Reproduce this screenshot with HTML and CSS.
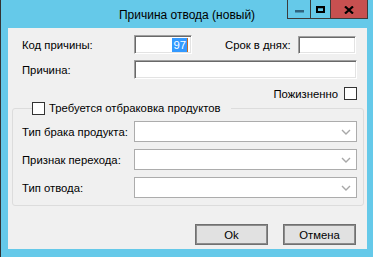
FILE: index.html
```html
<!DOCTYPE html>
<html>
<head>
<meta charset="utf-8">
<link rel="stylesheet" href="styles.css">
</head>
<body>
<div class="window">
  <div class="titlebar">
    <div class="title">Причина отвода (новый)</div>
    <div class="controls">
      <div class="ctl ctl-min"><svg width="9" height="3" viewBox="0 0 9 3"><rect x="0" y="0" width="9" height="2.5" fill="#2f6580"/></svg></div>
      <div class="ctl ctl-max"><svg width="9" height="7" viewBox="0 0 9 7"><rect x="1" y="1.25" width="7" height="4.75" fill="none" stroke="#000" stroke-width="2"/><rect x="0" y="0" width="9" height="2" fill="#000"/></svg></div>
      <div class="ctl ctl-close"><svg width="10" height="8" viewBox="0 0 10 8"><path d="M1 0.5 L9 7.5 M9 0.5 L1 7.5" stroke="#000" stroke-width="2.2"/></svg></div>
    </div>
  </div>
  <div class="panel">
    <div class="row row1">
      <span class="lbl">Код причины:</span>
      <div class="tb tb-code"><span class="sel">97</span><span class="caret"></span></div>
      <span class="lbl lbl-days">Срок в днях:</span>
      <div class="tb tb-days"></div>
    </div>
    <div class="row row2">
      <span class="lbl">Причина:</span>
      <div class="tb tb-reason"></div>
    </div>
    <div class="row row3">
      <span class="cblabel">Пожизненно</span>
      <span class="cb"></span>
    </div>
    <fieldset class="group">
      <legend class="legend"><span class="cb"></span><span>Требуется отбраковка продуктов</span></legend>
      <div class="grid">
        <span class="lbl">Тип брака продукта:</span>
        <div class="combo"><svg width="10" height="6" viewBox="0 0 10 6"><path d="M1 1 L5 5 L9 1" fill="none" stroke="#a8a8a8" stroke-width="1.4"/></svg></div>
        <span class="lbl">Признак перехода:</span>
        <div class="combo"><svg width="10" height="6" viewBox="0 0 10 6"><path d="M1 1 L5 5 L9 1" fill="none" stroke="#a8a8a8" stroke-width="1.4"/></svg></div>
        <span class="lbl">Тип отвода:</span>
        <div class="combo"><svg width="10" height="6" viewBox="0 0 10 6"><path d="M1 1 L5 5 L9 1" fill="none" stroke="#a8a8a8" stroke-width="1.4"/></svg></div>
      </div>
    </fieldset>
    <div class="buttons">
      <div class="btn">Ok</div>
      <div class="btn">Отмена</div>
    </div>
  </div>
</div>
</body>
</html>
```
FILE: styles.css
```css
html, body {
  margin: 0;
  padding: 0;
}
body {
  width: 373px;
  height: 257px;
  overflow: hidden;
  font-family: "Liberation Sans", Arial, sans-serif;
  font-size: 11.3px;
  color: #000;
}
.window {
  width: 372px;
  height: 257px;
  border-left: 1px solid #333;
  background: #65c9e9;
  display: flex;
  flex-direction: column;
}
.titlebar {
  height: 28px;
  display: grid;
  grid-template-columns: 1fr auto 1fr;
  align-items: start;
}
.title {
  grid-column: 2;
  font-size: 12px;
  line-height: 16px;
  padding-top: 7px;
  color: #000;
}
.controls {
  grid-column: 3;
  justify-self: end;
  display: flex;
  margin-right: 5px;
  height: 19px;
  border: 1px solid #3c3c3c;
  border-top: none;
  box-sizing: border-box;
}
.ctl {
  height: 18px;
  display: flex;
  align-items: center;
  justify-content: center;
}
.ctl-min {
  width: 22px;
  border-right: 1px solid #3c3c3c;
}
.ctl-min svg { margin-top: 4px; }
.ctl-max {
  width: 19px;
  border-right: 1px solid #3c3c3c;
}
.ctl-max svg { margin-top: 1px; }
.ctl-close {
  width: 36px;
  background: #c75050;
}
.ctl-close svg { margin-top: 1px; }
.panel {
  margin: 0 6px 8px 7px;
  height: 221px;
  background: #f0f0f0;
  box-sizing: border-box;
  padding-top: 7px;
  display: flex;
  flex-direction: column;
}
.row {
  display: flex;
  align-items: center;
}
.row1, .row2 {
  padding-left: 14px;
  height: 19px;
}
.lbl {
  width: 112px;
  flex: none;
  white-space: nowrap;
}
.lbl-days {
  width: 73px;
  margin-left: 33px;
}
.tb {
  height: 19px;
  box-sizing: border-box;
  background: #fff;
  border: 1px solid;
  border-color: #a0a0a0 #ffffff #ffffff #a0a0a0;
  box-shadow: inset 1px 1px 0 #696969, inset -1px -1px 0 #e3e3e3;
  display: flex;
  align-items: center;
  justify-content: flex-end;
}
.tb-code { width: 58px; padding-right: 3px; }
.tb-days { width: 58px; height: 18px; margin-top: 1px; }
.tb-reason { width: 223px; }
.row2 { margin-top: 6px; }
.sel {
  background: #3399ff;
  color: #fff;
  line-height: 14px;
  padding: 0 1px;
}
.caret {
  width: 1px;
  height: 14px;
  background: #c06a2a;
}
.row3 {
  margin-top: 8px;
  justify-content: flex-end;
  padding-right: 10px;
  height: 13px;
}
.cblabel {
  margin-right: 6px;
}
.cb {
  width: 13px;
  height: 13px;
  box-sizing: border-box;
  border: 1px solid #333;
  background: #fff;
  flex: none;
}
.group {
  margin: 2px 3px 0 4px;
  padding: 6px 0 7px 9px;
  border: 1px solid #dcdcdc;
  border-radius: 3px;
  min-width: 0;
}
.legend {
  margin-left: 10px;
  padding: 0 10px 0 0;
  display: flex;
  align-items: center;
  gap: 4px;
  line-height: 13px;
  height: 13px;
}
.grid {
  display: grid;
  grid-template-columns: 112px 223px;
  row-gap: 7px;
  align-items: center;
}
.combo {
  height: 21px;
  box-sizing: border-box;
  border: 1px solid #acacac;
  background: #fff;
  display: flex;
  align-items: center;
  justify-content: flex-end;
  padding-right: 5px;
}
.buttons {
  margin-top: 18px;
  display: flex;
  justify-content: flex-end;
  gap: 15px;
  padding-right: 11px;
}
.btn {
  width: 73px;
  height: 21px;
  box-sizing: border-box;
  border: 1px solid #707070;
  box-shadow: inset 0 0 0 1px #8c8c8c;
  background: #e1e1e1;
  display: flex;
  align-items: center;
  justify-content: center;
}
```
